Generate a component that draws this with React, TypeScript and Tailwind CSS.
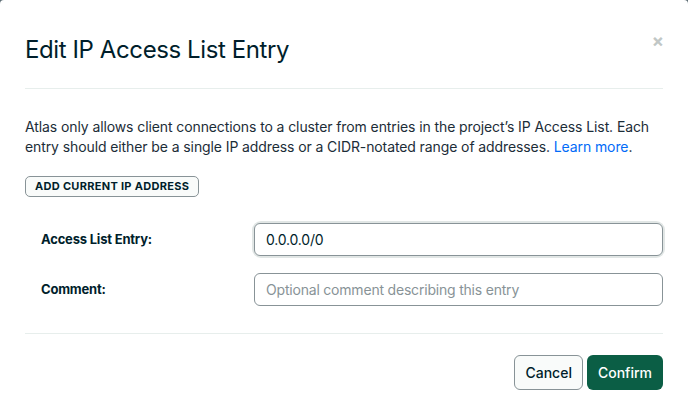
import React from 'react'

export default function App() {
  return (
    <div className="h-[410px] w-[688px] overflow-hidden bg-[#5d6c74]" style={{ fontFamily: 'Inter, "Noto Sans", sans-serif' }}>
      <div className="relative h-[420px] w-[688px] rounded-[4px] bg-white text-[#001e2b]">
        <button className="absolute right-[24px] top-[32px] text-[18px] font-bold leading-none text-[#c1c7c6]">×</button>
        <div className="px-[25px] pt-[35px]">
          <h2 className="text-[24px] leading-[30px] tracking-[-0.4px] text-[#001e2b]">Edit IP Access List Entry</h2>
          <div className="mt-[23px] h-px bg-[#e7eeec]" />
          <p className="mt-[28px] text-[14px] leading-[20px] tracking-[-0.1px] text-[#1c2d38]">
            Atlas only allows client connections to a cluster from entries in the project’s IP Access List. Each
            <br />
            entry should either be a single IP address or a CIDR-notated range of addresses.{' '}
            <span className="text-[#016bf8]">Learn more</span>.
          </p>
          <button className="mt-[19px] h-[21px] rounded-[5px] border border-[#889397] bg-[#f9fbfa] px-[9px] text-[11px] font-bold leading-none tracking-[0.3px] text-[#001e2b]">
            ADD CURRENT IP ADDRESS
          </button>
          <div className="mt-[26px] flex flex-col gap-[17px]">
            <div className="flex items-center">
              <label className="w-[229px] pl-[16px] text-[13px] font-bold tracking-[-0.2px]">Access List Entry:</label>
              <div className="flex-1 rounded-[7px] ring-[2px] ring-[#e1e6e5]">
                <input
                  defaultValue="0.0.0.0/0"
                  className="block h-[33px] w-full rounded-[6px] border border-[#889397] px-[11px] text-[14px] tracking-[-0.2px] text-[#001e2b] outline-none"
                />
              </div>
            </div>
            <div className="flex items-center">
              <label className="w-[229px] pl-[16px] text-[13px] font-bold tracking-[-0.2px]">Comment:</label>
              <input
                placeholder="Optional comment describing this entry"
                className="block h-[33px] flex-1 rounded-[6px] border border-[#889397] px-[11px] text-[14px] tracking-[-0.2px] outline-none placeholder:text-[#889397]"
              />
            </div>
          </div>
          <div className="mt-[27px] h-px bg-[#e7eeec]" />
          <div className="mt-[21px] flex justify-end gap-[4px]">
            <button className="h-[35px] rounded-[6px] border border-[#889397] bg-[#f9fbfa] px-[10px] text-[14px] font-medium text-[#001e2b]">
              Cancel
            </button>
            <button className="h-[35px] rounded-[6px] bg-[#0b5e45] px-[11px] text-[14px] font-medium text-white">
              Confirm
            </button>
          </div>
        </div>
      </div>
    </div>
  )
}
